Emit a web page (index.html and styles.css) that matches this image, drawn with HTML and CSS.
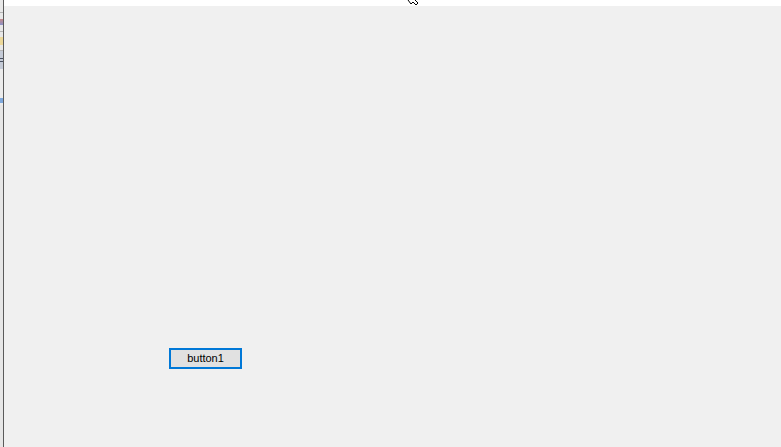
FILE: index.html
```html
<!DOCTYPE html>
<html>
<head>
<meta charset="utf-8">
<link rel="stylesheet" href="styles.css">
</head>
<body>
<div class="screen">
  <div class="edge">
    <div class="e-a"></div>
    <div class="e-line"></div>
    <div class="e-b"><span class="mark red"></span></div>
    <div class="e-line"></div>
    <div class="e-b"><span class="mark yellow"></span></div>
    <div class="e-line"></div>
    <div class="e-sel"><span class="eq"></span><span class="eq"></span></div>
    <div class="e-c"></div>
    <div class="e-d"><span class="mark blue"></span></div>
    <div class="e-rest"></div>
  </div>
  <div class="divider"></div>
  <div class="window">
    <div class="topband">
      <svg class="cursor" width="12" height="6" viewBox="0 0 12 6">
        <path d="M1 0 L4 4 L6 2 L9 5 L11 3 L8 0" fill="#fff" stroke="#000" stroke-width="1"/>
      </svg>
    </div>
    <div class="client">
      <button class="btn">button1</button>
    </div>
  </div>
</div>
</body>
</html>
```
FILE: styles.css
```css
html, body {
  margin: 0;
  padding: 0;
  width: 781px;
  height: 447px;
  overflow: hidden;
  background: #f0f0f0;
}
.screen {
  display: flex;
  width: 781px;
  height: 447px;
}
.edge {
  width: 3px;
  display: flex;
  flex-direction: column;
  background: #e4e4e4;
}
.e-a { height: 12px; background: #e8e8e8; }
.e-line { height: 1px; background: #b4b4b4; }
.e-b {
  height: 18px;
  background: #e8e8e8;
  display: flex;
  align-items: center;
}
.mark { display: block; width: 3px; height: 6px; }
.red { background: linear-gradient(#c88a8a, #8a92c8); }
.yellow { background: #ecd89a; height: 8px; }
.blue { background: #7ea8dc; height: 5px; }
.e-sel {
  height: 18px;
  background: #c4cad6;
  display: flex;
  flex-direction: column;
  justify-content: center;
  gap: 2px;
}
.eq { display: block; height: 1px; width: 3px; background: #4a5262; }
.e-c { height: 26px; background: #ececec; }
.e-d { height: 10px; background: #ececec; display: flex; align-items: center; }
.e-rest { flex: 1; background: #e6e6e6; }
.divider {
  width: 1px;
  background: #5a5a5a;
}
.window {
  flex: 1;
  display: flex;
  flex-direction: column;
  background: #f0f0f0;
}
.topband {
  height: 6px;
  background: #ffffff;
  padding-left: 403px;
}
.cursor { display: block; }
.client {
  flex: 1;
  padding: 342px 0 0 165px;
}
.btn {
  display: block;
  box-sizing: border-box;
  width: 73px;
  height: 21px;
  margin: 0;
  padding: 0;
  border: 2px solid #0078d7;
  background: #e1e1e1;
  font-family: "Liberation Sans", Arial, sans-serif;
  font-size: 11px;
  color: #000;
  line-height: 17px;
  text-align: center;
}
```
